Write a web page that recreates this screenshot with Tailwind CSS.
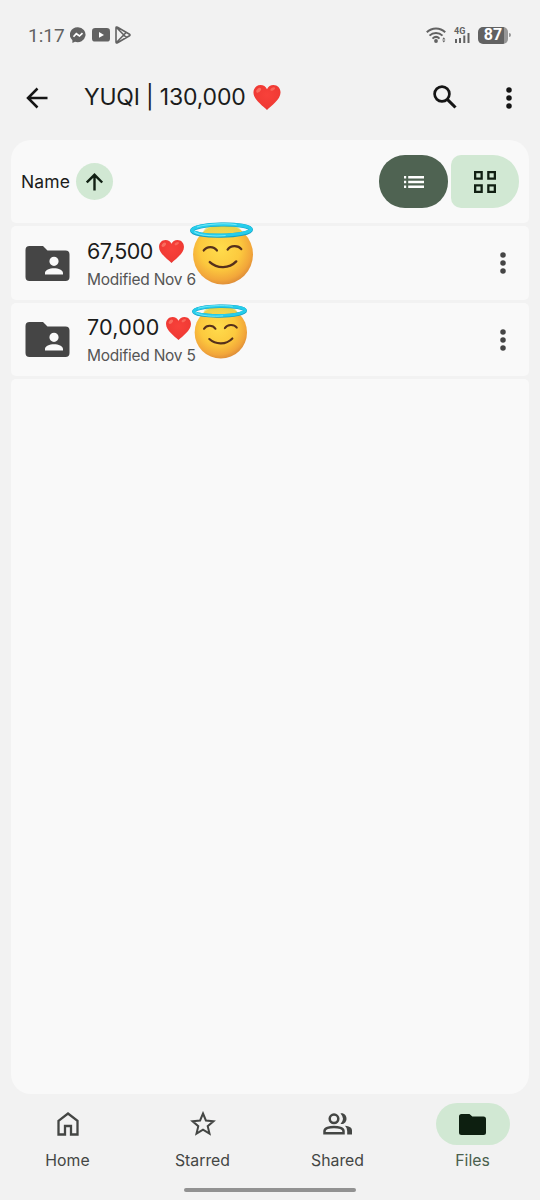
<!DOCTYPE html>
<html lang="en">
<head>
<meta charset="utf-8">
<title>Files</title>
<script src="https://cdn.jsdelivr.net/npm/@tailwindcss/browser@4"></script>
</head>
<body class="bg-[#f2f2f2]">
<svg width="0" height="0" class="absolute">
  <defs>
    <radialGradient id="skin" cx=".45" cy=".4" r=".62"><stop offset="0" stop-color="#ffdc4c"/><stop offset=".55" stop-color="#fcc93e"/><stop offset=".85" stop-color="#f2a63a"/><stop offset="1" stop-color="#dc8b38"/></radialGradient>
    <radialGradient id="red" cx=".5" cy=".4" r=".65"><stop offset="0" stop-color="#f8413a"/><stop offset=".75" stop-color="#f03a34"/><stop offset="1" stop-color="#d63636"/></radialGradient>
    <linearGradient id="glow" x1="0" y1="0" x2="0" y2="1"><stop offset="0" stop-color="#d3d94e"/><stop offset="1" stop-color="#ffe45c" stop-opacity="0"/></linearGradient>
    <symbol id="heart" viewBox="0 0 26 24"><path d="M13 24C9 20 0 14 0 7.200C0 3 3 0 6.800 0C9.500 0 12 1.500 13 4C14 1.500 16.500 0 19.200 0C23 0 26 3 26 7.200C26 14 17 20 13 24Z" fill="url(#red)"/><ellipse cx="5" cy="5" rx="2.800" ry="1.700" transform="rotate(-42 5 5)" fill="#ff8e7c" opacity=".6"/><ellipse cx="18.500" cy="3.800" rx="2.500" ry="1.300" transform="rotate(-28 18.500 3.800)" fill="#ff8e7c" opacity=".5"/></symbol>
    <symbol id="angel" viewBox="0 0 62 62">
      <circle cx="32.500" cy="32" r="29.500" fill="url(#skin)"/>
      <ellipse cx="32" cy="10" rx="19" ry="8" fill="url(#glow)"/>
      <g fill="none" stroke="#56301b" stroke-linecap="round"><path d="M13.500 28C16.500 23.500 23.500 23.500 26.500 28M37 27.200C40 22.700 47.500 22.700 50.500 26.700" stroke-width="2.200"/><path d="M19.500 39.500C27 46.300 38.500 46 45.500 38.800" stroke-width="2.400"/></g>
      <g fill="none" transform="rotate(-1 31 8)"><ellipse cx="31" cy="8" rx="29" ry="5.500" stroke="#159fc4" stroke-width="4"/><ellipse cx="31" cy="7.700" rx="29" ry="5.300" stroke="#25cdeb" stroke-width="3.200"/><path d="M4 9C9 13.300 25 14.300 35 13.400M7 4.400C17 1.500 35 1 46 2.900" stroke="#75e9f6" stroke-width="1"/></g>
    </symbol>
    <symbol id="dots" viewBox="0 0 6 22"><circle cx="3" cy="3.100" r="2.750"/><circle cx="3" cy="11" r="2.750"/><circle cx="3" cy="18.900" r="2.750"/></symbol>
    <symbol id="shared" viewBox="0 0 44 36"><path fill-rule="evenodd" d="M4 0H17.500L22 4.500H40Q44 4.500 44 8.500V31Q44 35 40 35H4Q0 35 0 31V4Q0 0 4 0ZM28.500 10.700A4.600 4.600 0 1 0 28.500 19.900A4.600 4.600 0 1 0 28.500 10.700ZM19.500 28.500H37.500V27C37.500 20.500 19.500 20.500 19.500 27Z"/></symbol>
  </defs>
</svg>

<div class="flex h-[1200px] w-[540px] flex-col overflow-hidden font-[Inter,Roboto,sans-serif] text-[#1b1c1b]">
  <!-- Status bar -->
  <header class="flex h-[70px] items-center pr-[29px] pl-[28px] text-[#626262]">
    <span class="w-[42px] font-[Roboto,sans-serif] text-[19px] leading-none whitespace-nowrap">1:17</span>
    <svg class="size-4" viewBox="0 0 16 16"><path d="M8 .2A7.800 7.500 0 0 0 2.400 13.200V16L5 14.800A8 7.500 0 1 0 8 .2" fill="#626262"/><path d="M3.500 9.800L6.300 6.700L9.500 9L12.500 6.100" fill="none" stroke="#fff" stroke-width="1.700"/></svg>
    <svg class="ml-[6px] h-[14px] w-[18px]" viewBox="0 0 18 14"><rect width="18" height="13.600" rx="3.200" fill="#626262"/><path d="M7 4L12 6.900L7 9.700Z" fill="#fff"/></svg>
    <svg class="ml-[5px] h-[18px] w-[16px]" viewBox="0 0 16 18" fill="none" stroke="#626262" stroke-width="1.600" stroke-linejoin="round"><path d="M1 2Q1 .5 2.500 1.300L14.500 8.200Q15.500 9 14.500 9.800L2.500 16.700Q1 17.500 1 16ZM1.500 1.500L11.300 11.500M1.500 16.500L11.300 6.300"/></svg>
    <div class="flex-1"></div>
    <svg class="mr-2 h-4 w-5" viewBox="0 0 20 16" fill="none" stroke="#626262" stroke-width="2"><path d="M.8 5.300C6 .1 14 .1 19.200 5.300M3.500 8.600C7.200 5 12.800 5 16.500 8.600M6.500 11.600C8.800 9.400 11.300 9.400 13.500 11.600"/><circle cx="10" cy="14" r="1.900" fill="#626262" stroke="none"/><path d="M16.200 12.400L17.800 10.200L19.400 12.400ZM16.200 13.400L17.800 15.600L19.400 13.400Z" fill="#626262" stroke="none"/></svg>
    <div class="mr-2 flex h-4 w-4 flex-col">
      <span class="h-[6px] font-[Roboto,sans-serif] text-[9px] leading-[8px] font-bold">4G</span>
      <svg class="h-[10px] w-4" viewBox="0 0 16 10" stroke="#626262" stroke-width="2"><path d="M2 10V6M6 10V5M10.300 10V2.500M14.500 10V0"/></svg>
    </div>
    <div class="flex items-center">
      <div class="flex h-[17px] w-[30px] items-center justify-center rounded-[5px] bg-linear-to-r from-[#626262] from-87% to-[#979797] to-87% font-[Roboto,sans-serif] text-[16px] leading-none font-bold text-white">87</div>
      <div class="ml-px h-1 w-[2px] rounded-r bg-[#979797]"></div>
    </div>
  </header>

  <!-- App bar -->
  <div class="flex h-[54px] items-center pr-[28.500px] pl-[26px]">
    <svg class="mt-px size-[22px]" viewBox="0 0 22 22" fill="none" stroke="#151515" stroke-width="2.500"><path d="M21.500 11H2M11.500 1.500L2 11L11.500 20.500"/></svg>
    <h1 class="ml-[36px] w-[169px] text-[23px] leading-none font-normal tracking-[-0.18px] whitespace-nowrap">YUQI | 130,000</h1>
    <svg class="h-[25px] w-[28px]"><use href="#heart"/></svg>
    <div class="flex-1"></div>
    <svg class="mr-[48.500px] size-6" viewBox="0 0 24 24" fill="none" stroke="#151515" stroke-width="2.700"><circle cx="9" cy="9" r="7.400"/><path d="M14.300 14.300L22.500 22.500" stroke-width="3.100"/></svg>
    <svg class="mt-px h-[22px] w-[6px]" fill="#151515"><use href="#dots"/></svg>
  </div>

  <main class="mx-[11px] mt-4 flex h-[954px] flex-col gap-[3px]">
    <section class="flex h-[83px] shrink-0 items-center rounded-t-[20px] rounded-b-[5px] bg-[#f9f9f9] px-[10px]">
      <span class="w-[55px] text-[17.500px] leading-none font-normal tracking-[0.1px] whitespace-nowrap">Name</span>
      <div class="flex size-[37px] items-center justify-center rounded-full bg-[#d1e8d3]">
        <svg class="size-[18px]" viewBox="0 0 18 18" fill="none" stroke="#101f12" stroke-width="2.400"><path d="M8.500 17.500V2M.8 9.500L8.500 1.800L16.200 9.500"/></svg>
      </div>
      <div class="flex-1"></div>
      <div class="mr-[3px] flex h-[53px] w-[69px] items-center justify-center rounded-[26px] bg-[#4f6352]">
        <svg class="h-3 w-5" viewBox="0 0 20 12" fill="#fff"><path d="M0 0h2.200v2.500H0zM4.200 0H20v2.500H4.200zM0 4.800h2.200v2.500H0zM4.200 4.800H20v2.500H4.200zM0 9.500h2.200V12H0zM4.200 9.500H20V12H4.200z"/></svg>
      </div>
      <div class="flex h-[53px] w-[68px] items-center justify-center rounded-l-[10px] rounded-r-[26px] bg-[#d1e8d3]">
        <svg class="size-[22px]" viewBox="0 0 22 22" fill="none" stroke="#101f12" stroke-width="2.300"><path d="M1.150 1.150h6.500v6.500h-6.500zM14.350 1.150h6.500v6.500h-6.500zM1.150 14.350h6.500v6.500h-6.500zM14.350 14.350h6.500v6.500h-6.500z"/></svg>
      </div>
    </section>

    <section class="relative flex h-[74px] shrink-0 items-center rounded-[5px] bg-[#f9f9f9] pr-[23px] pl-[14px]">
      <svg class="mt-[2px] h-9 w-[45px]" fill="#454545"><use href="#shared"/></svg>
      <div class="ml-[17px] flex flex-col gap-[6px] pt-px">
        <div class="flex h-[26px] items-center"><span class="w-[72px] text-[21.500px] leading-none font-normal tracking-[-0.5px] whitespace-nowrap">67,500</span><svg class="h-[23px] w-[25px]"><use href="#heart"/></svg></div>
        <span class="text-[15.500px] leading-[18px] font-normal tracking-[-0.25px] whitespace-nowrap text-[#555]">Modified Nov 6</span>
      </div>
      <div class="flex-1"></div>
      <svg class="h-[22px] w-[6px]" fill="#454545"><use href="#dots"/></svg>
      <svg class="absolute -top-[4px] left-[179px] size-[63px]"><use href="#angel"/></svg>
    </section>

    <section class="relative flex h-[73px] shrink-0 items-center rounded-[5px] bg-[#f9f9f9] pr-[23px] pl-[14px]">
      <svg class="mt-px h-9 w-[45px]" fill="#454545"><use href="#shared"/></svg>
      <div class="ml-[17px] flex flex-col gap-[6px] pt-px">
        <div class="flex h-[26px] items-center"><span class="w-[78.500px] text-[21.500px] leading-none font-normal tracking-[0.25px] whitespace-nowrap">70,000</span><svg class="h-[23px] w-[25px]"><use href="#heart"/></svg></div>
        <span class="text-[15.500px] leading-[18px] font-normal tracking-[-0.25px] whitespace-nowrap text-[#555]">Modified Nov 5</span>
      </div>
      <div class="flex-1"></div>
      <svg class="h-[22px] w-[6px]" fill="#454545"><use href="#dots"/></svg>
      <svg class="absolute top-px left-[181px] size-[55px]"><use href="#angel"/></svg>
    </section>
    <section class="flex-1 rounded-t-[5px] rounded-b-[20px] bg-[#f9f9f9]"></section>
  </main>

  <nav class="grid h-[92px] grid-cols-4 pt-[9px] text-[15.800px] leading-5 text-[#444644]">
    <a class="flex flex-col items-center gap-[6px]">
      <div class="flex h-[42px] w-[74px] items-center justify-center"><svg class="size-6" viewBox="0 0 24 24" fill="none" stroke="#444644" stroke-width="2.300"><path d="M2.500 8.800L12 1.500L21.500 8.800V22.500H15V14H9V22.500H2.500Z"/></svg></div><span>Home</span>
    </a>
    <a class="flex flex-col items-center gap-[6px]">
      <div class="flex h-[42px] w-[74px] items-center justify-center"><svg class="size-[26px]" viewBox="0 0 26 26" fill="none" stroke="#444644" stroke-width="2"><path d="M13 2.500L15.900 9.500L23.500 10.200L17.700 15.200L19.500 22.600L13 18.600L6.500 22.600L8.300 15.200L2.500 10.200L10.100 9.500Z"/></svg></div><span>Starred</span>
    </a>
    <a class="flex flex-col items-center gap-[6px]">
      <div class="flex h-[42px] w-[74px] items-center justify-center"><svg class="h-[22px] w-[30px]" viewBox="0 0 30 22"><g fill="none" stroke="#444644" stroke-width="2.500"><circle cx="11" cy="5.800" r="4.300"/><path d="M1.500 20.200V18C1.500 12.500 20.500 12.500 20.500 18V20.200Z"/></g><path d="M17.500.4C25.500-.6 25.500 12 17.500 11Q20 8.200 20 5.700T17.500.4ZM22 12.700C26.500 13.200 29 14.500 29 17.500V21.500H24.200V18Q24.200 14.800 22 12.700" fill="#444644"/></svg></div><span>Shared</span>
    </a>
    <a class="flex flex-col items-center gap-[6px] text-[#4a604d]">
      <div class="flex h-[42px] w-[74px] items-center justify-center rounded-full bg-[#d1e8d3]"><svg class="h-[21px] w-[27px]" viewBox="0 0 27 21"><path d="M2.500 0H10.500L13.300 2.600H24.500Q27 2.600 27 5.100V18.500Q27 21 24.500 21H2.500Q0 21 0 18.500V2.500Q0 0 2.500 0Z" fill="#0d1f10"/></svg></div><span>Files</span>
    </a>
  </nav>
  <div class="flex h-[14px] items-start justify-center pt-[2px]"><div class="h-[4px] w-[172px] rounded-full bg-[#929292]"></div></div>
</div>
</body>
</html>
